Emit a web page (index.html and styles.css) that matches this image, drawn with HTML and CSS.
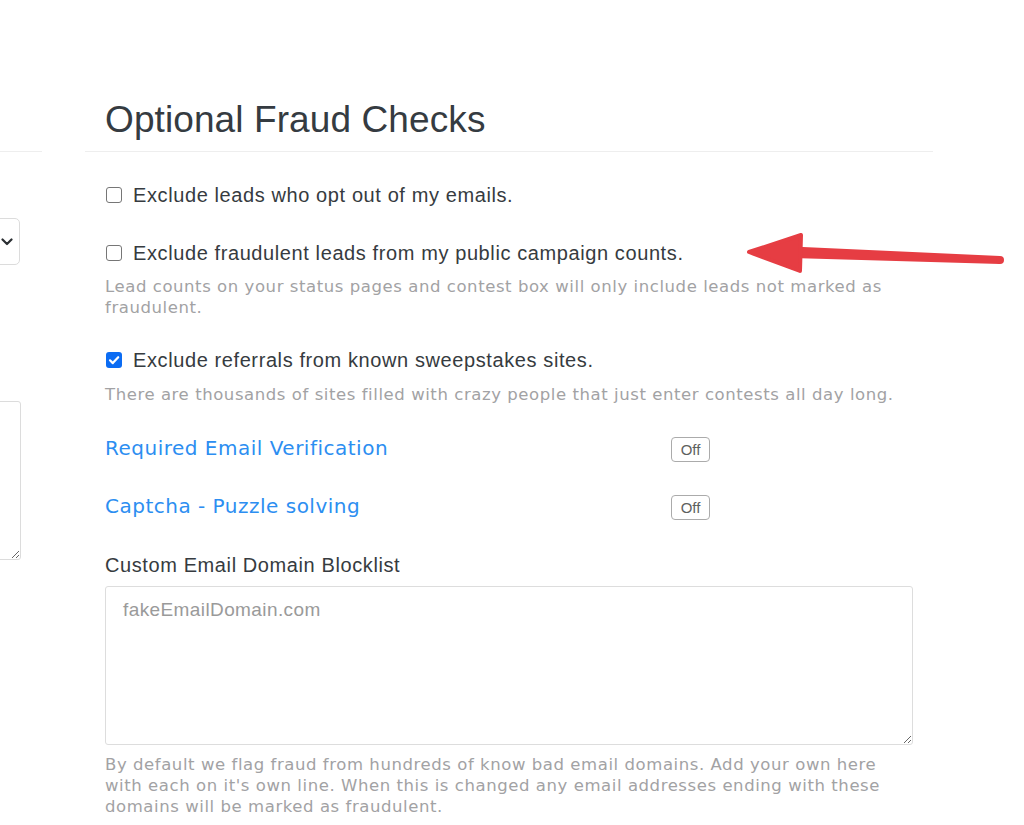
FILE: index.html
```html
<!DOCTYPE html>
<html>
<head>
<meta charset="utf-8">
<link rel="stylesheet" href="styles.css">
</head>
<body>
<div class="page">
  <div class="side">
    <div class="side-head"></div>
    <div class="side-select">
      <svg class="chev" width="12" height="8" viewBox="0 0 12 8"><path d="M1.5 1.5L6 6l4.5-4.5" fill="none" stroke="#2b2f33" stroke-width="2.2" stroke-linecap="round" stroke-linejoin="round"/></svg>
    </div>
    <textarea class="side-area"></textarea>
  </div>
  <div class="main">
    <div class="head"><h1>Optional Fraud Checks</h1></div>
    <div class="body">
      <label class="check row1"><span class="box"></span><span>Exclude leads who opt out of my emails.</span></label>
      <label class="check row2"><span class="box"></span><span>Exclude fraudulent leads from my public campaign counts.</span></label>
      <p class="help help1">Lead counts on your status pages and contest box will only include leads not marked as fraudulent.</p>
      <label class="check row3"><span class="box checked"><svg width="16" height="16" viewBox="0 0 16 16"><path d="M4 8.3l2.8 2.8L12.2 5.2" fill="none" stroke="#fff" stroke-width="2.2" stroke-linecap="round" stroke-linejoin="round"/></svg></span><span>Exclude referrals from known sweepstakes sites.</span></label>
      <p class="help help2">There are thousands of sites filled with crazy people that just enter contests all day long.</p>
      <div class="toggle-row trow1"><a class="link">Required Email Verification</a><span class="off">Off</span></div>
      <div class="toggle-row trow2"><a class="link">Captcha - Puzzle solving</a><span class="off">Off</span></div>
      <div class="field-label">Custom Email Domain Blocklist</div>
      <textarea class="area" placeholder="fakeEmailDomain.com"></textarea>
      <p class="help help3">By default we flag fraud from hundreds of know bad email domains. Add your own here with each on it's own line. When this is changed any email addresses ending with these domains will be marked as fraudulent.</p>
    </div>
  </div>
  <svg class="arrow" width="270" height="60" viewBox="0 0 270 60">
    <polygon points="52,21.5 260,31 260,39 52,33" fill="#e63d43"/>
    <circle cx="260" cy="35" r="4" fill="#e63d43"/>
    <polygon points="9,27 61,10 60,46" fill="#e63d43" stroke="#e63d43" stroke-width="4" stroke-linejoin="round"/>
  </svg>
</div>
</body>
</html>
```
FILE: styles.css
```css
html, body {
  margin: 0;
  padding: 0;
  background: #fff;
}
body {
  font-family: "Liberation Sans", Arial, sans-serif;
  color: #343a40;
}
.page {
  position: relative;
  display: flex;
  width: 1024px;
  height: 825px;
  overflow: hidden;
}
.side {
  flex: none;
  width: 42px;
  overflow: hidden;
}
.side-head {
  height: 151px;
  border-bottom: 1px solid #eeeeee;
}
.side-select {
  box-sizing: border-box;
  width: 60px;
  height: 47px;
  margin-left: -40px;
  margin-top: 66px;
  border: 1px solid #dcdcdc;
  border-radius: 5px;
  display: flex;
  align-items: center;
  justify-content: flex-end;
  padding-right: 6px;
}
.chev {
  display: block;
  margin-top: 1px;
}
.side-area {
  display: block;
  box-sizing: border-box;
  width: 61px;
  height: 159px;
  margin-left: -40px;
  margin-top: 136px;
  border: 1px solid #dcdcdc;
  border-radius: 3px;
  padding: 0;
  outline: none;
}
.main {
  flex: none;
  width: 848px;
  margin-left: 43px;
}
.head {
  padding: 98px 20px 0 20px;
  height: 53px;
  border-bottom: 1px solid #eeeeee;
}
h1 {
  margin: 0;
  font-size: 37px;
  line-height: 44px;
  font-weight: 400;
  letter-spacing: 0.1px;
  color: #353b41;
}
.body {
  padding: 0 20px;
}
.check {
  display: flex;
  align-items: center;
  height: 30px;
  font-size: 20px;
  letter-spacing: 0.6px;
  color: #363b40;
  white-space: nowrap;
}
.row1 { margin-top: 28px; }
.row2 { margin-top: 28px; }
.row3 { margin-top: 27px; }
.box {
  flex: none;
  box-sizing: border-box;
  width: 16px;
  height: 16px;
  margin-left: 1px;
  margin-right: 11px;
  border: 1.4px solid #767676;
  border-radius: 3px;
  background: #fff;
}
.box.checked {
  border: none;
  background: #0b6cf3;
}
.box svg {
  display: block;
}
.help {
  margin: 0;
  font-family: "DejaVu Sans", Verdana, sans-serif;
  font-size: 16.5px;
  line-height: 21px;
  letter-spacing: 0.57px;
  color: #a2a2a4;
}
.help1 { margin-top: 8px; }
.help2 { margin-top: 9px; }
.help3 { margin-top: 9px; }
.toggle-row {
  display: grid;
  grid-template-columns: 566px auto;
  align-items: center;
  height: 30px;
}
.trow1 { margin-top: 28px; }
.trow2 { margin-top: 28px; }
.link {
  font-family: "DejaVu Sans", Verdana, sans-serif;
  font-size: 20px;
  letter-spacing: 0.5px;
  color: #2c8ef1;
  text-decoration: none;
  white-space: nowrap;
}
.off {
  box-sizing: border-box;
  width: 39px;
  height: 25px;
  border: 1.5px solid #ababab;
  border-radius: 4px;
  display: flex;
  align-items: center;
  justify-content: center;
  font-size: 15px;
  color: #5f5f5f;
}
.trow1 .off { margin-top: 2px; }
.trow2 .off { margin-top: 3px; }
.field-label {
  margin-top: 29px;
  height: 30px;
  line-height: 30px;
  font-size: 20px;
  letter-spacing: 0.6px;
  color: #363b40;
}
.area {
  display: block;
  box-sizing: border-box;
  width: 808px;
  height: 159px;
  margin-top: 6px;
  border: 1px solid #dddddd;
  border-radius: 3px;
  padding: 12px 17px;
  font-family: "Liberation Sans", Arial, sans-serif;
  font-size: 19px;
  letter-spacing: 0.4px;
  color: #333;
  outline: none;
  resize: vertical;
}
.area::placeholder {
  color: #9a9a9a;
}
.arrow {
  position: absolute;
  left: 740px;
  top: 225px;
}
```
